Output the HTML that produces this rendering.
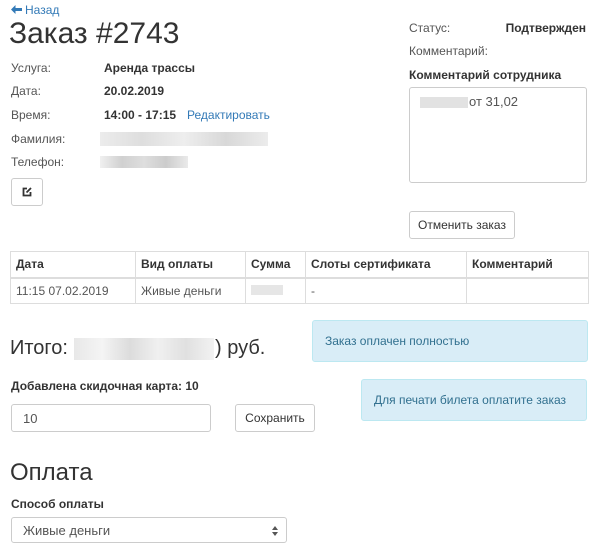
<!DOCTYPE html>
<html><head><meta charset="utf-8"><style>
*{box-sizing:border-box;margin:0;padding:0}
body{width:600px;height:551px;background:#fff;font-family:"Liberation Sans","DejaVu Sans",sans-serif;color:#333;font-size:12px;position:relative;overflow:hidden}
.a{position:absolute;white-space:nowrap}
.b{font-weight:bold}
.lbl{color:#555}
.btn{position:absolute;border:1px solid #ccc;border-radius:3px;background:#fff;color:#333;font-size:12px;text-align:center}
.blur{position:absolute;background:#ddd}
table{position:absolute;left:10px;top:251px;width:579px;border-collapse:collapse;font-size:12px}
td,th{border:1px solid #ddd;height:26px;padding:0 5px;text-align:left}
th{border-bottom:2px solid #ddd;font-weight:bold}
.alert{position:absolute;background:#d9edf7;border:1px solid #bce8f1;border-radius:3px;color:#31708f;font-size:12px;padding-left:12px;display:flex;align-items:center}
.inp{position:absolute;border:1px solid #ccc;border-radius:3px;background:#fff;font-size:13px;color:#555;padding-left:11px;display:flex;align-items:center}
</style></head><body>
<svg class="a" style="left:11px;top:5px" width="11" height="9" viewBox="0 0 11 9"><path d="M0 4.5L4.5 0V3H11V6H4.5V9Z" fill="#337ab7"/></svg>
<div class="a" style="left:25px;top:3px;color:#337ab7;font-size:12px">Назад</div>
<div class="a" style="left:9px;top:17px;font-size:30px;color:#333">Заказ #2743</div>

<div class="a lbl" style="left:11px;top:61px">Услуга:</div>
<div class="a b" style="left:104px;top:61px">Аренда трассы</div>
<div class="a lbl" style="left:11px;top:84px">Дата:</div>
<div class="a b" style="left:104px;top:84px">20.02.2019</div>
<div class="a lbl" style="left:11px;top:108px">Время:</div>
<div class="a b" style="left:104px;top:108px">14:00 - 17:15</div>
<div class="a" style="left:187px;top:108px;color:#337ab7">Редактировать</div>
<div class="a lbl" style="left:11px;top:132px">Фамилия:</div>
<div class="blur" style="left:100px;top:132px;width:168px;height:14px;background:linear-gradient(90deg,#ececec,#dedede,#eee,#d8d8d8,#ececec)"></div>
<div class="a lbl" style="left:11px;top:155px">Телефон:</div>
<div class="blur" style="left:100px;top:156px;width:88px;height:12px;background:linear-gradient(90deg,#f0f0f0,#d0d0d0,#dedede,#cccccc,#eaeaea)"></div>
<div class="btn" style="left:11px;top:178px;width:32px;height:28px">
<svg width="12" height="12" viewBox="0 0 12 12" style="margin-top:7px"><path d="M6 2.5H2.5v7h7V6" fill="none" stroke="#333" stroke-width="1.8"/><path d="M5.5 6.5L10 2" stroke="#333" stroke-width="1.8"/></svg></div>

<div class="a lbl" style="left:409px;top:21px">Статус:</div>
<div class="a b" style="right:14px;top:21px">Подтвержден</div>
<div class="a lbl" style="left:409px;top:44px">Комментарий:</div>
<div class="a b" style="left:409px;top:68px">Комментарий сотрудника</div>
<div style="position:absolute;left:409px;top:87px;width:178px;height:96px;border:1px solid #ccc;border-radius:3px"></div>
<div class="blur" style="left:420px;top:97px;width:48px;height:11px;background:#e2e2e2"></div>
<div class="a" style="left:469px;top:94px;font-size:13px;color:#555">от 31,02</div>
<div class="btn" style="left:409px;top:211px;width:106px;height:28px;line-height:26px">Отменить заказ</div>

<table>
<tr><th style="width:125px">Дата</th><th style="width:110px">Вид оплаты</th><th style="width:60px">Сумма</th><th style="width:161px">Слоты сертификата</th><th>Комментарий</th></tr>
<tr style="color:#555"><td>11:15 07.02.2019</td><td>Живые деньги</td><td><span style="display:inline-block;width:32px;height:10px;background:#e6e6e6"></span></td><td>-</td><td></td></tr>
</table>

<div class="alert" style="left:312px;top:320px;width:276px;height:42px">Заказ оплачен полностью</div>
<div class="a" style="left:10px;top:337px;font-size:20px;color:#333">Итого:</div>
<div class="blur" style="left:74px;top:338px;width:140px;height:22px;background:linear-gradient(90deg,#e8e8e8,#f4f4f4,#dcdcdc,#f0f0f0,#e0e0e0,#f2f2f2)"></div>
<div class="a" style="left:215px;top:337px;font-size:20px;color:#333">) руб.</div>

<div class="a b" style="left:11px;top:379px">Добавлена скидочная карта: 10</div>
<div class="alert" style="left:361px;top:379px;width:226px;height:42px">Для печати билета оплатите заказ</div>
<div class="inp" style="left:11px;top:404px;width:200px;height:28px">10</div>
<div class="btn" style="left:235px;top:404px;width:80px;height:28px;line-height:26px">Сохранить</div>

<div class="a" style="left:10px;top:459px;font-size:24px;color:#333">Оплата</div>
<div class="a b" style="left:11px;top:497px">Способ оплаты</div>
<div class="inp" style="left:11px;top:517px;width:276px;height:26px">Живые деньги
<svg width="6" height="10" viewBox="0 0 6 10" style="position:absolute;right:8px;top:8px"><path d="M0 4L3 0L6 4Z M0 6L3 10L6 6Z" fill="#555"/></svg></div>
</body></html>
